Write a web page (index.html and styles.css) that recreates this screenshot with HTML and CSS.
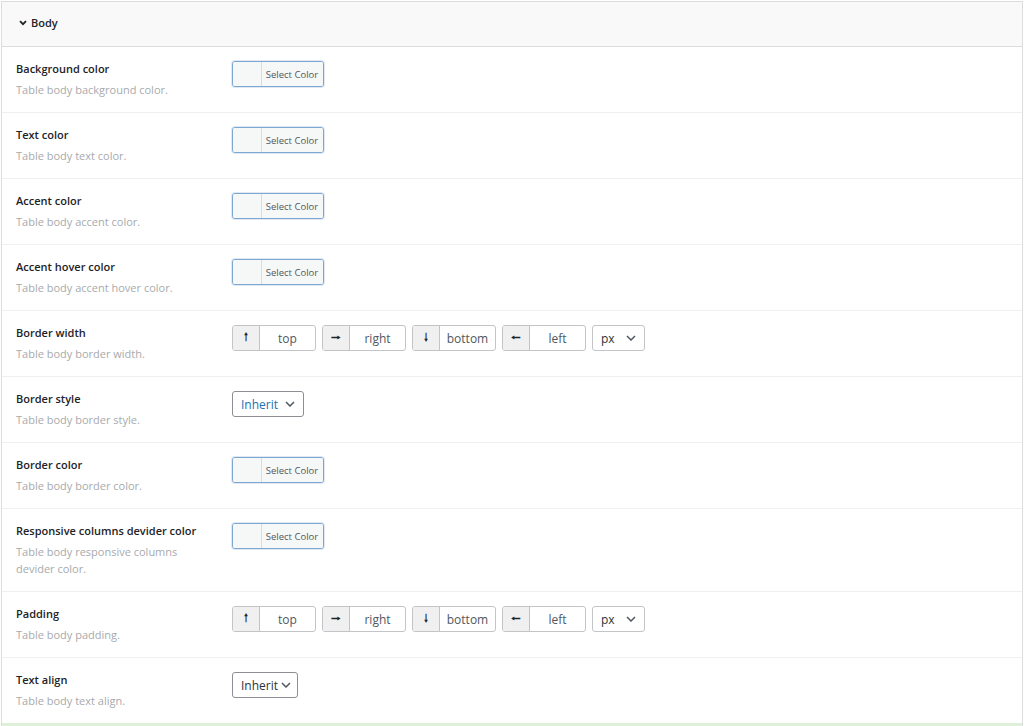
FILE: index.html
```html
<!DOCTYPE html>
<html>
<head>
<meta charset="utf-8">
<link rel="stylesheet" href="styles.css">
</head>
<body>
<div class="panel">
  <div class="panel-head">
    <svg class="chev" width="8" height="6" viewBox="0 0 8 6"><path d="M1 1.2 L4 4.2 L7 1.2" fill="none" stroke="#1d2327" stroke-width="1.8"/></svg>
    <span>Body</span>
  </div>

  <div class="row">
    <div class="lab"><div class="title">Background color</div><div class="desc">Table body background color.</div></div>
    <div class="ctl"><div class="colorbtn"><span class="sw"></span><span class="ct">Select Color</span></div></div>
  </div>
  <div class="row">
    <div class="lab"><div class="title">Text color</div><div class="desc">Table body text color.</div></div>
    <div class="ctl"><div class="colorbtn"><span class="sw"></span><span class="ct">Select Color</span></div></div>
  </div>
  <div class="row">
    <div class="lab"><div class="title">Accent color</div><div class="desc">Table body accent color.</div></div>
    <div class="ctl"><div class="colorbtn"><span class="sw"></span><span class="ct">Select Color</span></div></div>
  </div>
  <div class="row">
    <div class="lab"><div class="title">Accent hover color</div><div class="desc">Table body accent hover color.</div></div>
    <div class="ctl"><div class="colorbtn"><span class="sw"></span><span class="ct">Select Color</span></div></div>
  </div>
  <div class="row">
    <div class="lab"><div class="title">Border width</div><div class="desc">Table body border width.</div></div>
    <div class="ctl">
      <div class="dim"><span class="pre">&#129041;</span><span class="val">top</span></div>
      <div class="dim"><span class="pre">&#129042;</span><span class="val">right</span></div>
      <div class="dim"><span class="pre">&#129043;</span><span class="val">bottom</span></div>
      <div class="dim"><span class="pre">&#129040;</span><span class="val">left</span></div>
      <div class="sel unit"><span>px</span><svg width="10" height="6" viewBox="0 0 10 6"><path d="M1 1 L5 5 L9 1" fill="none" stroke="#50575e" stroke-width="1.5"/></svg></div>
    </div>
  </div>
  <div class="row">
    <div class="lab"><div class="title">Border style</div><div class="desc">Table body border style.</div></div>
    <div class="ctl"><div class="sel inh blue"><span>Inherit</span><svg width="10" height="6" viewBox="0 0 10 6"><path d="M1 1 L5 5 L9 1" fill="none" stroke="#50575e" stroke-width="1.5"/></svg></div></div>
  </div>
  <div class="row">
    <div class="lab"><div class="title">Border color</div><div class="desc">Table body border color.</div></div>
    <div class="ctl"><div class="colorbtn"><span class="sw"></span><span class="ct">Select Color</span></div></div>
  </div>
  <div class="row">
    <div class="lab"><div class="title">Responsive columns devider color</div><div class="desc">Table body responsive columns devider color.</div></div>
    <div class="ctl"><div class="colorbtn"><span class="sw"></span><span class="ct">Select Color</span></div></div>
  </div>
  <div class="row">
    <div class="lab"><div class="title">Padding</div><div class="desc">Table body padding.</div></div>
    <div class="ctl">
      <div class="dim"><span class="pre">&#129041;</span><span class="val">top</span></div>
      <div class="dim"><span class="pre">&#129042;</span><span class="val">right</span></div>
      <div class="dim"><span class="pre">&#129043;</span><span class="val">bottom</span></div>
      <div class="dim"><span class="pre">&#129040;</span><span class="val">left</span></div>
      <div class="sel unit"><span>px</span><svg width="10" height="6" viewBox="0 0 10 6"><path d="M1 1 L5 5 L9 1" fill="none" stroke="#50575e" stroke-width="1.5"/></svg></div>
    </div>
  </div>
  <div class="row last">
    <div class="lab"><div class="title">Text align</div><div class="desc">Table body text align.</div></div>
    <div class="ctl"><div class="sel align"><span>Inherit</span><svg width="10" height="6" viewBox="0 0 10 6"><path d="M1 1 L5 5 L9 1" fill="none" stroke="#50575e" stroke-width="1.5"/></svg></div></div>
  </div>
  <div class="next"></div>
</div>
</body>
</html>
```

FILE: styles.css
```css
html, body { margin: 0; padding: 0; background: #fff; }
body {
  font-family: "Open Sans", "Noto Sans", sans-serif;
  font-size: 11px;
  color: #1d2327;
  padding: 1px 1px 0 1px;
}
.panel {
  border: 1px solid #dcdcde;
  border-bottom: none;
  height: 725px;
  box-sizing: border-box;
  display: flex;
  flex-direction: column;
}
.panel-head {
  height: 45px;
  flex: none;
  background: #f9f9f9;
  border-bottom: 1px solid #dcdcde;
  display: flex;
  align-items: center;
  padding-left: 17px;
  padding-bottom: 3px;
  box-sizing: border-box;
  gap: 4px;
  font-weight: 600;
  font-size: 11px;
}
.chev { margin-top: 1px; }
.row {
  display: flex;
  flex: none;
  border-bottom: 1px solid #f0f0f0;
  padding: 13px 15px 14px 14px;
}
.row.last { border-bottom: none; }
.lab { width: 216px; flex: none; }
.title { font-weight: 600; line-height: 18px; margin-bottom: 3px; }
.desc { color: #a7aaad; line-height: 17px; width: 175px; }
.ctl { display: flex; gap: 6px; align-items: flex-start; margin-top: 1px; }
.colorbtn {
  width: 92px; height: 26px; box-sizing: border-box;
  border: 1px solid #7da6d1;
  border-radius: 3px;
  display: flex;
  overflow: hidden;
  background: #f6f7f7;
  box-shadow: 0 0 0 1px rgba(125,166,209,0.25);
}
.sw { width: 28px; flex: none; background: #f6f7f7; border-right: 1px solid #dcdcde; }
.ct { flex: 1; display: flex; align-items: center; justify-content: center; font-size: 9.5px; color: #50575e; background: #f6f7f7; padding-right: 1px; }
.dim {
  width: 84px; height: 26px; box-sizing: border-box;
  border: 1px solid #c3c4c7; border-radius: 3px;
  display: flex; overflow: hidden;
}
.pre {
  width: 26px; flex: none; background: #f0f0f1; border-right: 1px solid #c3c4c7;
  display: flex; align-items: center; justify-content: center;
  font-family: "DejaVu Sans", sans-serif; font-size: 11px; color: #1d2327; font-weight: bold;
}
.val { flex: 1; display: flex; align-items: center; justify-content: center; color: #50575e; font-size: 12px; }
.sel {
  height: 26px; box-sizing: border-box;
  border: 1px solid #8c8f94; border-radius: 3px;
  display: flex; align-items: center; justify-content: space-between;
  padding: 0 8px 0 8px;
  font-size: 12px; color: #2c3338;
}
.unit { width: 53px; border-color: #c3c4c7; }
.inh { width: 72px; }
.align { width: 66px; padding-right: 6px; }
.blue span { color: #2271b1; }
.next { flex: 1; border-top: 3px solid #dff0d8; margin-top: 0; }
```
